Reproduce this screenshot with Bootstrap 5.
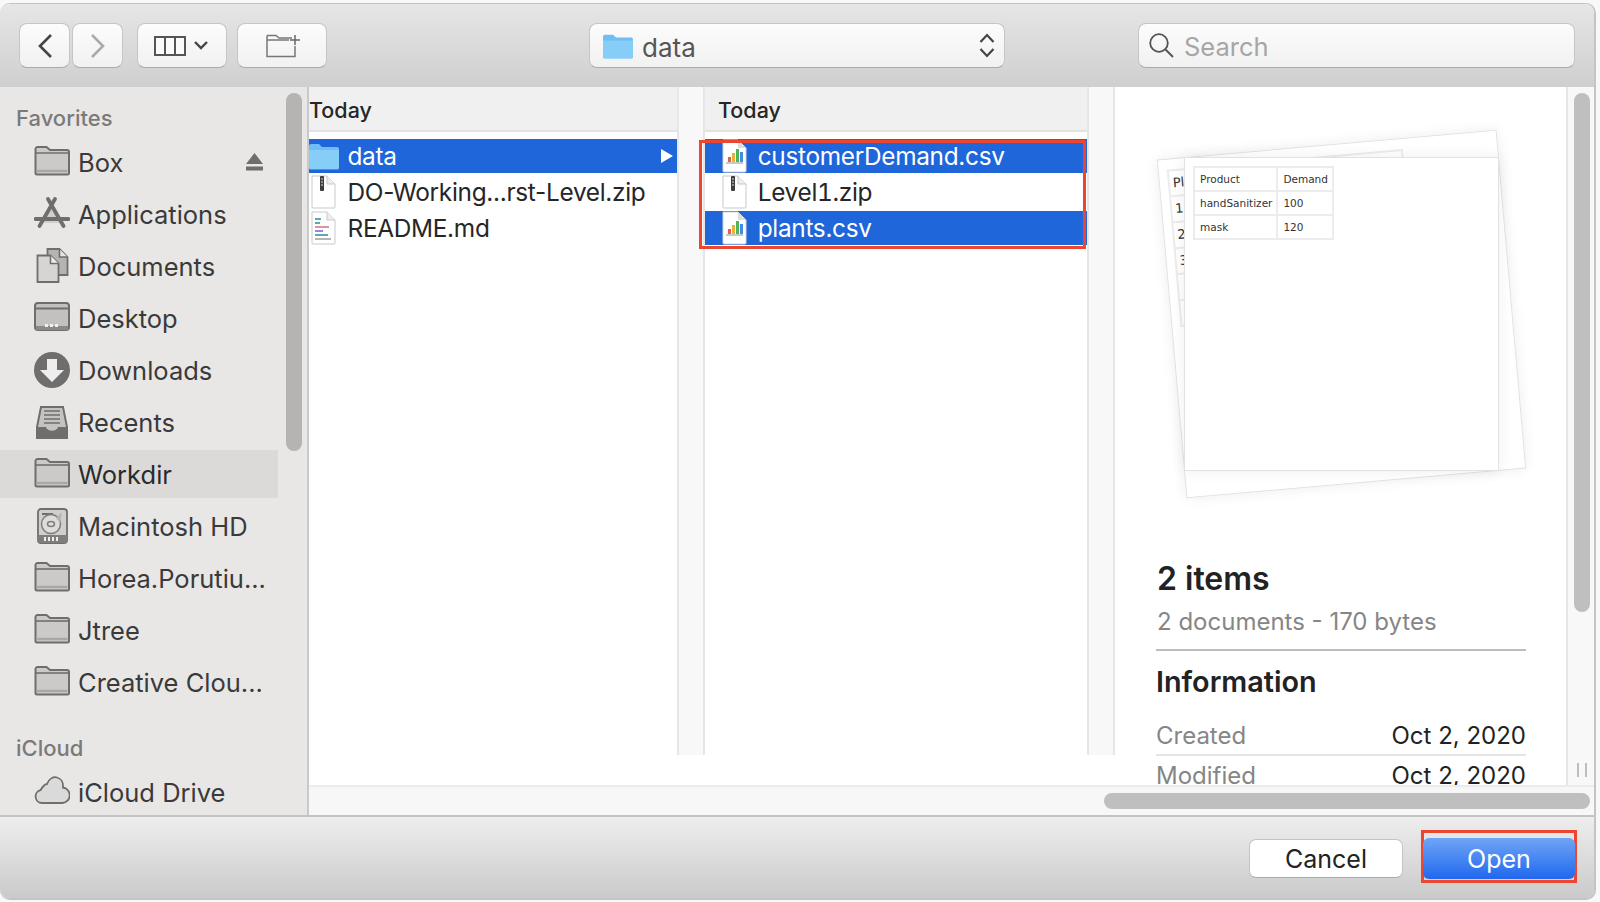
<!doctype html>
<html lang="en"><head><meta charset="utf-8"><title>Open dialog</title>
<link href="https://cdn.jsdelivr.net/npm/bootstrap@5.3.0/dist/css/bootstrap.min.css" rel="stylesheet">
<style>
html,body{height:902px;overflow:hidden}
body{background:#f8f8f8;font-family:Inter,"Liberation Sans",sans-serif;color:#262626}
.win{width:1596px;height:897px;margin-top:3px;border:1px solid #c4c4c4;border-width:1px 2px 2px 0;border-radius:10px;overflow:hidden;background:#fff}
.tbar{height:84px;background:linear-gradient(#e6e6e6,#cfcfcf);padding-left:19px}
.tb{height:45px;margin-top:1px;background:linear-gradient(#fcfcfc,#f1f1f1);border:1px solid #c6c6c6;border-bottom-color:#aaa;border-radius:8px;padding:0}
.b-nav{width:51px}.b-wide{width:90px}
.b-fwd{margin-left:2px}.b-view{margin-left:14px;padding-right:2px}.b-new{margin-left:10px;padding-left:2px}
.pathbox{width:416px;margin-left:262px;padding:0 9px 0 13px;font-size:26px;color:#555}
.pathbox svg:first-child{margin-right:9px}
.searchbox{width:437px;margin-left:133px;padding:0 10px;font-size:25.5px;color:#a6a6a6}
.searchbox svg{margin-right:2px}
.tb-txt{padding-top:3px}
.mainrow{height:728px}
.side{width:309px;background:#e8e7e6;border-right:2px solid #c9c9c9;overflow:hidden;flex:none}
.side-list{width:278px;padding-top:17px;flex:none}
.side-h{height:26px;line-height:28px;margin:0 0 8px 16px;font-size:22px;font-weight:500;color:#7b7a79}
.side-h2{margin-top:28px;margin-bottom:8px}
.side-i{height:48px;margin-bottom:4px;padding-left:34px;padding-top:3px;font-size:25.5px;color:#3a3a3a;white-space:nowrap}
.side-i svg{width:36px;height:36px;margin-right:8px;margin-top:-3px;flex:none}
.side-i svg.ej{width:17px;height:18px;margin-right:15px}
.side-i.act{background:#dcdad9;color:#2b2b2b}
.side-bar{width:16px;height:358px;margin:6px 0 0 8px;background:#b5b4b3;border-radius:8px;flex:none}
.browse{height:698px}
.fcol{flex:none;height:668px}
.fc1{width:368px}.fc2{width:382px}
.colhead{height:45px;line-height:46px;background:#f0f0f0;border-bottom:2px solid #e3e3e3;font-size:21.5px;font-weight:500;color:#262626;margin-bottom:7px}
.fc2 .colhead{padding-left:13px}
.frow{height:34px;margin-bottom:2px;padding-top:1px;font-size:24.4px;letter-spacing:-.31px;white-space:nowrap;position:relative}
.frow.sel{background:#1e66d9;color:#fff}
.frow svg{width:30px;height:34px;margin-top:-1px;flex:none}
.tab-digits{font-feature-settings:"tnum"}
.fc1 .frow svg{margin-left:-1px;margin-right:9.5px}
.fc1 .frow svg.fold-ico{margin-left:0;margin-right:8.5px}
.fc2 .frow svg{margin-left:13.5px;margin-right:9.2px}
.gut{width:28px;height:668px;background:#f8f8f8;border-left:2px solid #e6e6e6;border-right:2px solid #e6e6e6;flex:none}
.tri{width:0;height:0;border-left:12px solid #fff;border-top:7px solid transparent;border-bottom:7px solid transparent;margin-right:4px}
.redbox{position:absolute;left:-6px;top:1px;width:387px;height:109px;border:3px solid #ee4530;pointer-events:none}
.rel{position:relative}
.prev{width:451px;height:698px;padding:0 40px 0 41px;overflow:hidden;flex:none}
.stage{height:462px;position:relative}
.sheet{position:absolute;background:#fff;border:1px solid #e2e2e2;box-shadow:0 0 14px rgba(0,0,0,.07)}
.sh-back{left:15px;top:57px;width:341px;height:340px;transform:rotate(-5deg)}
.sh-front{left:28px;top:70px;width:315px;height:314px}
.mini{border-collapse:collapse;font-family:"DejaVu Sans",sans-serif;font-size:10.5px;color:#333;position:absolute}
.mini td{border:2px solid #ececec;height:24px;white-space:nowrap}
.mini-f{left:8px;top:8px}.mini-f td{padding:2px 4px 0 5px}.mini-f td:first-child{width:81px}.mini-f td:last-child{width:55px}
.mini-b{left:8px;top:10px;width:237px;font-size:13px}.mini-b td{height:26px;padding:0 4px 0 3px}.mini-b td:first-child{width:100px}
.pv-title{font-size:32px;line-height:36px;font-weight:600;color:#222;margin:12px 0 0 1px}
.pv-sub{font-size:24px;line-height:30px;color:#868686;margin:10px 0 0 1px}
.pv-hr{border-top:2px solid #bdbdbd;margin-top:12px;padding-top:14px}
.pv-info{font-size:28.8px;line-height:34px;font-weight:600;color:#222}
.pv-kvs{margin-top:22px}
.pv-kv{font-size:24px;line-height:30px;color:#222;height:35px;border-bottom:2px solid #e4e4e4}
.pv-kv span:first-child{color:#868686}
.pv-kv:last-child{border:0;margin-top:5px}
.vgut{width:30px;height:698px;background:#f8f8f8;border-left:2px solid #e6e6e6;flex:none;padding:6px 0 0 6px}
.vthumb{width:16px;height:519px;background:#bfbfbf;border-radius:8px}
.vgrip{width:10px;height:14px;margin:151px 0 0 3px;border-left:2px solid #bdbdbd;border-right:2px solid #bdbdbd}
.hbar{height:30px;background:#f7f7f7;border-top:2px solid #ececec;padding:6px 6px 0 795px}
.hthumb{height:16px;background:#bfbfbf;border-radius:8px;width:486px}
.fbar{height:84px;background:linear-gradient(#eeeeee,#cacaca);border-top:2px solid #c4c4c4;padding-right:17px}
.btn-cancel{width:154px;height:39px;margin-top:22px;margin-right:18px;padding:0;background:#fff;border:1px solid #c4c4c4;border-bottom-color:#aaa;border-radius:7px;font-size:25px;line-height:38px;color:#222}
.redwrap{border:3px solid #ee4530;padding-top:5px;margin-top:13px;height:53px;width:156px}
.btn-open{display:block;width:152px;height:41px;margin-left:-1px;padding:0;border:0;border-radius:6px;background:linear-gradient(#70a5f6,#1f68ee);color:#fff;font-size:25px;line-height:42px}
</style></head>
<body>
<svg width="0" height="0" class="d-block position-absolute">
<defs>
<symbol id="fold" viewBox="0 0 36 36"><g transform="translate(0 -2.500)"><path d="M1.500 7.500a2 2 0 0 1 2-2h9l3.500 3h17a2 2 0 0 1 2 2v21a1.500 1.500 0 0 1-1.500 1.500H3a1.500 1.500 0 0 1-1.500-1.500z" fill="#cbcac9" stroke="#6f6e6d" stroke-width="2"/><path d="M2 11.500h32" stroke="#6f6e6d" stroke-width="1.600"/><path d="M2.500 29.500h31" stroke="#a9a8a7" stroke-width="2.500"/></g></symbol>
<symbol id="apps" viewBox="0 0 36 36"><g stroke="#6f6e6d" fill="none" stroke-linecap="round"><path d="M7 27L18 8l11 19z" fill="#d0cfce" stroke="none"/><path d="M14 3l15.500 27M21 3L5.500 30" stroke-width="3.800"/><path d="M1.500 23h33" stroke-width="3.800"/></g></symbol>
<symbol id="docs" viewBox="0 0 36 36"><path d="M13.500 1h12l8 8v18h-20z" fill="#b5b4b3" stroke="#6f6e6d" stroke-width="1.800"/><path d="M25.500 1v8h8" fill="#e6e5e4" stroke="#6f6e6d" stroke-width="1.600"/><path d="M3.500 7.500h13l8 8V34h-21z" fill="#d6d5d4" stroke="#6f6e6d" stroke-width="1.800"/><path d="M16.500 7.500v8h8" fill="#eee" stroke="#6f6e6d" stroke-width="1.600"/></symbol>
<symbol id="desk" viewBox="0 0 36 36"><rect x="1" y="3" width="34" height="27" rx="3" fill="#c2c1c0" stroke="#6f6e6d" stroke-width="2"/><path d="M1.500 8.500h33" stroke="#6f6e6d" stroke-width="2"/><path d="M2 30v-4h32v4z" fill="#8a8988"/><path d="M11 24h3v3h-3zM16 24h3v3h-3zM21 24h3v3h-3z" fill="#f0f0f0"/></symbol>
<symbol id="dl" viewBox="0 0 36 36"><circle cx="18" cy="18" r="18" fill="#6f6e6d"/><path d="M13 7h10v11h7L18 30 6 18h7z" fill="#eeeeee"/></symbol>
<symbol id="rec" viewBox="0 0 36 36"><path d="M7 3h22l4 20v11H3V23z" fill="#c4c3c2" stroke="#6f6e6d" stroke-width="2"/><path d="M10 7h16M10 11h16M10 15h16M10 19h16" stroke="#6f6e6d" stroke-width="1.600"/><path d="M3 23h9c1 5 11 5 12 0h9v9a3 3 0 0 1-3 3H6a3 3 0 0 1-3-3z" fill="#6f6e6d"/></symbol>
<symbol id="hd" viewBox="0 0 36 36"><rect x="4" y="1" width="29" height="34" rx="3" fill="#d0cfce" stroke="#6f6e6d" stroke-width="1.800"/><path d="M8 5h11v2H8z" fill="#6f6e6d"/><circle cx="17" cy="16" r="9.500" fill="#dedddc" stroke="#7f7e7d" stroke-width="1.500"/><ellipse cx="17" cy="16" rx="3.500" ry="2.500" fill="none" stroke="#7f7e7d" stroke-width="1.500"/><path d="M22 10l6-6-2 11z" fill="#b5b4b3"/><path d="M4 27h29v6a2 2 0 0 1-2 2H6a2 2 0 0 1-2-2z" fill="#7f7e7d"/><path d="M10 29h2v4h-2zM14 29h2v4h-2zM18 29h2v4h-2zM22 29h2v4h-2z" fill="#eee"/></symbol>
<symbol id="cloud" viewBox="0 0 36 36"><path d="M8 32a6.500 6.500 0 0 1-1.500-12.800C9 15 11 13 13 13c2-5 6-7.500 10-6.500 4 1 6.500 5 6 10a7.800 7.800 0 0 1-.5 15.500z" fill="#dadada" stroke="#6f6e6d" stroke-width="1.800" transform="translate(0 -3)"/></symbol>
<symbol id="blue" viewBox="0 0 30 30"><path d="M0 5a2 2 0 0 1 2-2h8l3 3h15a2 2 0 0 1 2 2v19a1.500 1.500 0 0 1-1.500 1.500h-27A1.500 1.500 0 0 1 0 27z" fill="#6fbdf3"/><path d="M0 9h30v17a2 2 0 0 1-2 2H2a2 2 0 0 1-2-2z" fill="#86cdf8"/></symbol>
<symbol id="zip" viewBox="0 0 30 34"><path d="M4 1h15l8 8v23a1 1 0 0 1-1 1H5a1 1 0 0 1-1-1z" fill="#fff" stroke="#c9c9c9" stroke-width="1"/><path d="M19 1v8h8" fill="#eee" stroke="#c9c9c9"/><rect x="12" y="1" width="4" height="15" rx="1" fill="#3d3d3d"/><path d="M13 4h2M13 7h2M13 10h2" stroke="#ddd"/></symbol>
<symbol id="md" viewBox="0 0 30 34"><path d="M4 1h15l8 8v23a1 1 0 0 1-1 1H5a1 1 0 0 1-1-1z" fill="#fff" stroke="#c9c9c9"/><path d="M19 1v8h8" fill="#eee" stroke="#c9c9c9"/><path d="M7 8h6" stroke="#5aaab4" stroke-width="2"/><path d="M7 12h5" stroke="#5aaab4" stroke-width="2"/><path d="M7 16h14" stroke="#d69a9a" stroke-width="2"/><path d="M7 20h8" stroke="#a27ff0" stroke-width="2"/><path d="M7 24h13" stroke="#5aaab4" stroke-width="2"/><path d="M7 28h16" stroke="#b5b5b5" stroke-width="2"/></symbol>
<symbol id="csv" viewBox="0 0 30 34"><path d="M4 1h15l8 8v23a1 1 0 0 1-1 1H5a1 1 0 0 1-1-1z" fill="#fff" stroke="#d5d5d5"/><path d="M19 1v8h8" fill="#ddd"/><path d="M7 23h17v2H7z" fill="#c8c8c8"/><rect x="9" y="18" width="3" height="5" fill="#e0604c"/><rect x="13" y="14" width="3" height="9" fill="#e7b13a"/><rect x="17" y="10" width="3" height="13" fill="#4fb35c"/><rect x="21" y="13" width="3" height="10" fill="#3f8fe0"/></symbol>
</defs></svg>

<div class="win d-flex flex-column">
  <div class="tbar d-flex align-items-center">
    <button class="btn tb b-nav d-flex align-items-center justify-content-center" aria-label="Back"><svg width="16" height="26" viewBox="0 0 16 26"><path d="M14 2L3 13l11 11" fill="none" stroke="#444" stroke-width="2.600"/></svg></button>
    <button class="btn tb b-nav b-fwd d-flex align-items-center justify-content-center" aria-label="Forward"><svg width="16" height="26" viewBox="0 0 16 26"><path d="M2 2l11 11L2 24" fill="none" stroke="#aaa" stroke-width="2.600"/></svg></button>
    <button class="btn tb b-wide b-view d-flex align-items-center justify-content-center gap-2" aria-label="View"><svg width="32" height="20" viewBox="0 0 32 20"><path d="M1 1h30v18H1zM11 1v18M21 1v18" fill="#fafafa" stroke="#555" stroke-width="2"/></svg><svg width="14" height="9" viewBox="0 0 14 9"><path d="M1 1l6 6 6-6" fill="none" stroke="#444" stroke-width="2.400"/></svg></button>
    <button class="btn tb b-wide b-new d-flex align-items-center justify-content-center" aria-label="New folder"><svg width="34" height="25" viewBox="0 0 34 25"><path d="M1 2.500h9l3 2.500h13M1 2.500v21h28V13M1 7h22" fill="none" stroke="#777" stroke-width="1.500"/><path d="M29 2v10M24 7h10" stroke="#666" stroke-width="1.500"/></svg></button>
    <div class="tb pathbox d-flex align-items-center"><svg width="30" height="28" class="flex-none" viewBox="0 0 30 30" preserveAspectRatio="none"><use href="#blue"/></svg><span class="flex-grow-1 tb-txt">data</span><svg width="16" height="25" viewBox="0 0 16 25"><path d="M1.500 9l6.500-7 6.500 7M1.500 16l6.500 7 6.500-7" fill="none" stroke="#444" stroke-width="2.200"/></svg></div>
    <div class="tb searchbox d-flex align-items-center gap-2"><svg width="25" height="25" viewBox="0 0 25 25" class="flex-none"><circle cx="10" cy="10" r="8.800" fill="none" stroke="#555" stroke-width="1.800"/><path d="M16.500 16.500l7.500 7.500" stroke="#555" stroke-width="2"/></svg><span class="tb-txt">Search</span></div>
  </div>

  <div class="mainrow d-flex">
    <aside class="side d-flex">
      <div class="side-list">
        <div class="side-h">Favorites</div>
        <div class="side-i d-flex align-items-center"><svg><use href="#fold"/></svg><span class="flex-grow-1">Box</span><svg class="ej" viewBox="0 0 17 18"><path d="M8.500 0L17 11H0z" fill="#6f6e6d"/><rect y="13.500" width="17" height="4" fill="#6f6e6d"/></svg></div>
        <div class="side-i d-flex align-items-center"><svg><use href="#apps"/></svg>Applications</div>
        <div class="side-i d-flex align-items-center"><svg><use href="#docs"/></svg>Documents</div>
        <div class="side-i d-flex align-items-center"><svg><use href="#desk"/></svg>Desktop</div>
        <div class="side-i d-flex align-items-center"><svg><use href="#dl"/></svg>Downloads</div>
        <div class="side-i d-flex align-items-center"><svg><use href="#rec"/></svg>Recents</div>
        <div class="side-i act d-flex align-items-center"><svg><use href="#fold"/></svg>Workdir</div>
        <div class="side-i d-flex align-items-center"><svg><use href="#hd"/></svg>Macintosh HD</div>
        <div class="side-i d-flex align-items-center"><svg><use href="#fold"/></svg>Horea.Porutiu...</div>
        <div class="side-i d-flex align-items-center"><svg><use href="#fold"/></svg>Jtree</div>
        <div class="side-i d-flex align-items-center"><svg><use href="#fold"/></svg>Creative Clou...</div>
        <div class="side-h side-h2">iCloud</div>
        <div class="side-i d-flex align-items-center"><svg><use href="#cloud"/></svg>iCloud Drive</div>
      </div>
      <div class="side-bar"></div>
    </aside>

    <div class="flex-grow-1 d-flex flex-column">
      <div class="browse d-flex">
        <section class="fcol fc1">
          <div class="colhead">Today</div>
          <div class="frow sel d-flex align-items-center"><svg class="fold-ico" viewBox="0 0 30 34"><g transform="translate(0 2)"><use href="#blue" width="30" height="30"/></g></svg><span class="flex-grow-1">data</span><span class="tri"></span></div>
          <div class="frow d-flex align-items-center"><svg viewBox="0 0 30 34"><use href="#zip"/></svg>DO-Working...rst-Level.zip</div>
          <div class="frow d-flex align-items-center"><svg viewBox="0 0 30 34"><use href="#md"/></svg>README.md</div>
        </section>
        <div class="gut"></div>
        <section class="fcol fc2 rel">
          <div class="colhead">Today</div>
          <div class="rel">
            <div class="frow sel d-flex align-items-center"><svg viewBox="0 0 30 34"><use href="#csv"/></svg>customerDemand.csv</div>
            <div class="frow tab-digits d-flex align-items-center"><svg viewBox="0 0 30 34"><use href="#zip"/></svg>Level1.zip</div>
            <div class="frow sel d-flex align-items-center"><svg viewBox="0 0 30 34"><use href="#csv"/></svg>plants.csv</div>
            <div class="redbox"></div>
          </div>
        </section>
        <div class="gut"></div>
        <section class="prev">
          <div class="stage">
            <div class="sheet sh-back">
              <table class="mini mini-b"><tbody><tr><td>Plant</td><td></td></tr><tr><td>1</td><td></td></tr><tr><td>2</td><td></td></tr><tr><td>3</td><td></td></tr><tr><td></td><td></td></tr><tr><td></td><td></td></tr></tbody></table>
            </div>
            <div class="sheet sh-front">
              <table class="mini mini-f"><tbody><tr><td>Product</td><td>Demand</td></tr><tr><td>handSanitizer</td><td>100</td></tr><tr><td>mask</td><td>120</td></tr></tbody></table>
            </div>
          </div>
          <div class="pv-title">2 items</div>
          <div class="pv-sub">2 documents - 170 bytes</div>
          <div class="pv-hr"></div>
          <div class="pv-info">Information</div>
          <div class="pv-kvs">
            <div class="pv-kv d-flex justify-content-between"><span>Created</span><span>Oct 2, 2020</span></div>
            <div class="pv-kv d-flex justify-content-between"><span>Modified</span><span>Oct 2, 2020</span></div>
          </div>
        </section>
        <div class="vgut"><div class="vthumb"></div><div class="vgrip"></div></div>
      </div>
      <div class="hbar"><div class="hthumb"></div></div>
    </div>
  </div>

  <div class="fbar d-flex justify-content-end align-items-start">
    <button class="btn btn-cancel">Cancel</button>
    <div class="redwrap"><button class="btn btn-open">Open</button></div>
  </div>
</div>
</body></html>
